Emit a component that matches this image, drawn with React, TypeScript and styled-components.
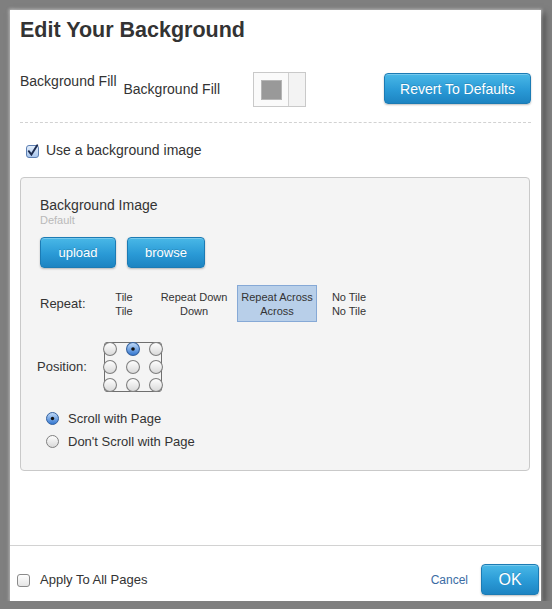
import styled, { createGlobalStyle, css } from 'styled-components';

const GlobalStyle = createGlobalStyle`
  html, body {
    margin: 0;
    padding: 0;
  }
  body {
    background: #7f7f7f;
    font-family: "Liberation Sans", Arial, sans-serif;
    color: #333;
  }
`;

const Dialog = styled.div`
  width: 531px;
  height: 591px;
  margin: 10px 0 0 10px;
  padding: 8px 10px 0;
  box-sizing: border-box;
  background: #fff;
  display: flex;
  flex-direction: column;
  box-shadow: 0 0 3px 1px rgba(255, 255, 255, 0.5), 3px 3px 7px rgba(0, 0, 0, 0.55);
`;

const Title = styled.h1`
  margin: 0;
  font-size: 21.5px;
  line-height: 25px;
  font-weight: bold;
  color: #333;
`;

const FillRow = styled.div`
  display: flex;
  align-items: flex-start;
  margin-top: 29px;
`;

const FillLabel = styled.span<{ $top: number; $left?: number }>`
  font-size: 14px;
  line-height: 17px;
  margin-top: ${(p) => p.$top}px;
  margin-left: ${(p) => p.$left ?? 0}px;
`;

const Swatch = styled.div`
  display: flex;
  width: 53px;
  height: 35px;
  margin-left: 33px;
  box-sizing: border-box;
  border: 1px solid #c9c9c9;
  background: #fafafa;
`;

const SwatchMain = styled.div`
  width: 34px;
  display: flex;
  align-items: center;
  justify-content: center;
  border-right: 1px solid #d0d0d0;
`;

const SwatchColor = styled.div`
  width: 21px;
  height: 20px;
  box-sizing: border-box;
  background: #999;
  border: 1px solid #b5b5b5;
`;

const SwatchSide = styled.div`
  flex: 1;
  background: #f3f3f3;
`;

const BlueButton = styled.button<{ $w: number; $fs: number }>`
  width: ${(p) => p.$w}px;
  height: 31px;
  padding: 0;
  border: 1px solid #1c7bb4;
  border-radius: 4px;
  background: linear-gradient(to bottom, #49b8e7 0%, #2a9ad6 55%, #1d84c2 100%);
  box-shadow: 0 1px 2px rgba(0, 0, 0, 0.25), inset 0 1px 0 rgba(255, 255, 255, 0.25);
  color: #fff;
  font-family: "Liberation Sans", Arial, sans-serif;
  font-size: ${(p) => p.$fs}px;
  text-shadow: 0 -1px 0 rgba(0, 0, 0, 0.15);
  cursor: pointer;
`;

const RevertButton = styled(BlueButton)`
  margin-left: auto;
  margin-top: 1px;
`;

const Dashed = styled.div`
  margin-top: 15px;
  border-top: 1px dashed #d2d2d2;
`;

const CheckRow = styled.label`
  display: flex;
  align-items: center;
  gap: 7px;
  margin-top: 19px;
  padding-left: 6px;
  font-size: 14px;
  line-height: 17px;
`;

const Panel = styled.div`
  margin: 18px 1px 0 0;
  padding: 19px 19px 17px;
  background: #f4f4f4;
  border: 1px solid #c9c9c9;
  border-radius: 4px;
`;

const PanelTitle = styled.div`
  font-size: 14px;
  line-height: 17px;
`;

const Hint = styled.div`
  font-size: 11px;
  line-height: 13px;
  color: #b9b9b9;
`;

const ButtonRow = styled.div`
  display: flex;
  gap: 11px;
  margin-top: 10px;
`;

const RepeatRow = styled.div`
  display: grid;
  grid-template-columns: 57px 54px 86px 80px 64px;
  align-items: center;
  margin-top: 17px;
`;

const FieldLabel = styled.span`
  font-size: 13px;
  line-height: 16px;
`;

const RepeatOption = styled.div<{ $selected?: boolean }>`
  font-size: 11px;
  line-height: 14px;
  text-align: center;
  padding: 4px 0 3px;
  border: 1px solid transparent;
  color: #333;
  ${(p) =>
    p.$selected &&
    css`
      background: #b8cfe9;
      border-color: #86a9d6;
    `}
`;

const PositionRow = styled.div`
  display: flex;
  align-items: center;
  margin: 20px 0 0 -3px;
`;

const PositionLabel = styled(FieldLabel)`
  width: 66px;
`;

const PositionGrid = styled.div`
  position: relative;
  display: grid;
  grid-template-columns: repeat(3, 14px);
  grid-auto-rows: 14px;
  column-gap: 9px;
  row-gap: 4px;

  &::before {
    content: '';
    position: absolute;
    inset: 0 1px;
    border: 1px solid #6f6f6f;
    border-radius: 3px;
  }

  & > svg {
    position: relative;
  }
`;

const RadioList = styled.div`
  display: flex;
  flex-direction: column;
  margin-top: 15px;
  padding-left: 6px;
`;

const RadioRow = styled.label`
  display: flex;
  align-items: center;
  gap: 9px;
  height: 23px;
  font-size: 13px;
`;

const Spacer = styled.div`
  flex: 1;
`;

const Footer = styled.div`
  display: flex;
  align-items: center;
  margin: 0 -10px;
  padding: 18px 2px 6px 7px;
  border-top: 1px solid #d2d2d2;
`;

const FooterCheck = styled.label`
  display: flex;
  align-items: center;
  gap: 10px;
  font-size: 13px;
`;

const CancelLink = styled.a`
  margin-left: auto;
  margin-right: 13px;
  font-size: 12px;
  color: #3b6ca4;
  cursor: pointer;
`;

const Checkbox = ({ checked }: { checked?: boolean }) => (
  <svg width="13" height="14" viewBox="0 0 13 14">
    <defs>
      <linearGradient id={checked ? 'cbOn' : 'cbOff'} x1="0" y1="0" x2="0" y2="1">
        <stop offset="0" stopColor={checked ? '#e6f0fc' : '#ffffff'} />
        <stop offset="1" stopColor={checked ? '#a6c4ec' : '#e4e4e4'} />
      </linearGradient>
    </defs>
    <rect
      x="0.5"
      y="1.5"
      width="12"
      height="12"
      rx="2.5"
      fill={`url(#${checked ? 'cbOn' : 'cbOff'})`}
      stroke={checked ? '#5d7fb2' : '#8a8a8a'}
    />
    {checked && (
      <path d="M2.8 7.2 L5.4 10.6 L11.2 1.2" fill="none" stroke="#1d2c4f" strokeWidth="1.9" strokeLinecap="round" />
    )}
  </svg>
);

const Radio = ({ checked, size = 13 }: { checked?: boolean; size?: number }) => (
  <svg width={size} height={size} viewBox="0 0 13 13">
    <defs>
      <linearGradient id={checked ? 'rdOn' : 'rdOff'} x1="0" y1="0" x2="0" y2="1">
        <stop offset="0" stopColor={checked ? '#c4ddf9' : '#ffffff'} />
        <stop offset="1" stopColor={checked ? '#2f74d0' : '#d8d8d8'} />
      </linearGradient>
    </defs>
    <circle
      cx="6.5"
      cy="6.5"
      r="6"
      fill={`url(#${checked ? 'rdOn' : 'rdOff'})`}
      stroke={checked ? '#35629f' : '#7f7f7f'}
    />
    {checked && <circle cx="6.5" cy="6.5" r="1.7" fill="#111" />}
  </svg>
);

const repeatOptions = [
  { top: 'Tile', bottom: 'Tile' },
  { top: 'Repeat Down', bottom: 'Down' },
  { top: 'Repeat Across', bottom: 'Across', selected: true },
  { top: 'No Tile', bottom: 'No Tile' },
];

export default function App() {
  return (
    <>
      <GlobalStyle />
      <Dialog>
        <Title>Edit Your Background</Title>

        <FillRow>
          <FillLabel $top={1}>Background Fill</FillLabel>
          <FillLabel $top={9} $left={7}>Background Fill</FillLabel>
          <Swatch>
            <SwatchMain>
              <SwatchColor />
            </SwatchMain>
            <SwatchSide />
          </Swatch>
          <RevertButton $w={147} $fs={14}>Revert To Defaults</RevertButton>
        </FillRow>

        <Dashed />

        <CheckRow>
          <Checkbox checked />
          Use a background image
        </CheckRow>

        <Panel>
          <PanelTitle>Background Image</PanelTitle>
          <Hint>Default</Hint>

          <ButtonRow>
            <BlueButton $w={76} $fs={13}>upload</BlueButton>
            <BlueButton $w={78} $fs={13}>browse</BlueButton>
          </ButtonRow>

          <RepeatRow>
            <FieldLabel>Repeat:</FieldLabel>
            {repeatOptions.map((o) => (
              <RepeatOption key={o.top} $selected={o.selected}>
                {o.top}
                <br />
                {o.bottom}
              </RepeatOption>
            ))}
          </RepeatRow>

          <PositionRow>
            <PositionLabel>Position:</PositionLabel>
            <PositionGrid>
              {Array.from({ length: 9 }, (_, i) => (
                <Radio key={i} size={14} checked={i === 1} />
              ))}
            </PositionGrid>
          </PositionRow>

          <RadioList>
            <RadioRow>
              <Radio checked />
              Scroll with Page
            </RadioRow>
            <RadioRow>
              <Radio />
              Don't Scroll with Page
            </RadioRow>
          </RadioList>
        </Panel>

        <Spacer />

        <Footer>
          <FooterCheck>
            <Checkbox />
            Apply To All Pages
          </FooterCheck>
          <CancelLink>Cancel</CancelLink>
          <BlueButton $w={58} $fs={16}>OK</BlueButton>
        </Footer>
      </Dialog>
    </>
  );
}
